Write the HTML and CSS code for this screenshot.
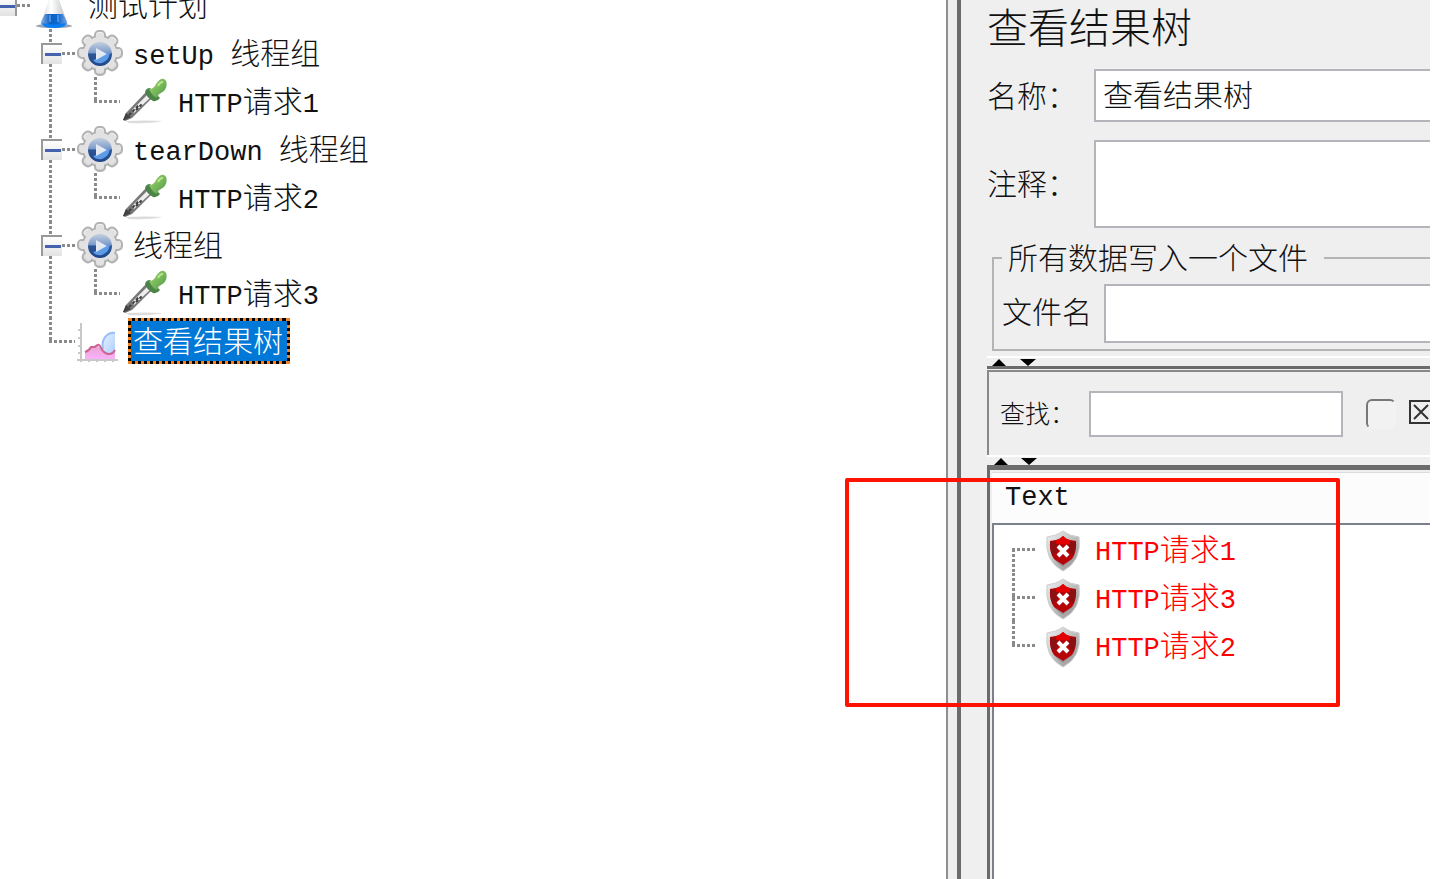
FILE: index.html
```
<!DOCTYPE html>
<html lang="zh">
<head>
    <meta charset="UTF-8">
    <title>查看结果树</title>
    <link rel="stylesheet" href="styles.css">
</head>
<body>
<!-- 图标 -->
<svg class="icon-defs" width="0" height="0">
    <defs>
        <linearGradient id="metal" x1="0" y1="0" x2="0" y2="1">
            <stop offset="0" stop-color="#f4f4f4"/>
            <stop offset="1" stop-color="#cdcdcd"/>
        </linearGradient>
        <linearGradient id="lens" x1="0" y1="0" x2="0" y2="1">
            <stop offset="0" stop-color="#c3cfe2"/>
            <stop offset=".45" stop-color="#7d9bc9"/>
            <stop offset=".5" stop-color="#2c5596"/>
            <stop offset="1" stop-color="#1f4688"/>
        </linearGradient>
        <linearGradient id="water" x1="0" y1="0" x2="1" y2="0">
            <stop offset="0" stop-color="#8db4e6"/>
            <stop offset=".35" stop-color="#0d60c0"/>
            <stop offset=".65" stop-color="#0c68d0"/>
            <stop offset="1" stop-color="#7ba6df"/>
        </linearGradient>
        <linearGradient id="glass" x1="0" y1="0" x2="1" y2="0">
            <stop offset="0" stop-color="#d4d6d8"/>
            <stop offset=".4" stop-color="#ffffff"/>
            <stop offset="1" stop-color="#b9bdc0"/>
        </linearGradient>
        <linearGradient id="bulb" x1="0" y1="0" x2="1" y2="1">
            <stop offset="0" stop-color="#a2d873"/>
            <stop offset="1" stop-color="#4f9a42"/>
        </linearGradient>
        <linearGradient id="pink" x1="0" y1="0" x2="0" y2="1">
            <stop offset="0" stop-color="#e7a5cf"/>
            <stop offset="1" stop-color="#fbb0fa"/>
        </linearGradient>
        <linearGradient id="sky" x1="0" y1="0" x2="1" y2="1">
            <stop offset="0" stop-color="#eef6ff"/>
            <stop offset="1" stop-color="#aaccfb"/>
        </linearGradient>
        <linearGradient id="rim" x1="0" y1="0" x2="1" y2="1">
            <stop offset="0" stop-color="#f3f3f3"/>
            <stop offset="1" stop-color="#8c8c8c"/>
        </linearGradient>
    </defs>
    <symbol id="i-flask" viewBox="0 0 46 46">
        <ellipse cx="22" cy="44" rx="18" ry="2" fill="#9aa1aa"/>
        <path d="M18 3h8v12l9 25q1 4-3 4H12q-4 0-3-4l9-25z" fill="url(#glass)"/>
        <path d="M13 32h18l4 8q1 5-4 5H13q-5 0-4-5z" fill="url(#water)"/>
        <path d="M10 41q12 3 24 0-1 5-12 5t-12-5z" fill="#087cf5"/>
        <path d="M18 33v7M26 33v7" stroke="#4a90df" stroke-width="2"/>
    </symbol>
    <symbol id="i-gear" viewBox="0 0 46 46">
        <g fill="url(#metal)" stroke="#b2b2b2" stroke-width="2">
            <rect x="18" y="1" width="10" height="44" rx="4"/>
            <rect x="1" y="18" width="44" height="10" rx="4"/>
            <rect x="18" y="1" width="10" height="44" rx="4" transform="rotate(45 23 23)"/>
            <rect x="18" y="1" width="10" height="44" rx="4" transform="rotate(-45 23 23)"/>
            <circle cx="23" cy="23" r="17"/>
        </g>
        <!-- 盖住齿根处的描边 -->
        <g fill="#e2e2e2">
            <rect x="19" y="3" width="8" height="40" rx="3"/>
            <rect x="3" y="19" width="40" height="8" rx="3"/>
            <rect x="19" y="3" width="8" height="40" rx="3" transform="rotate(45 23 23)"/>
            <rect x="19" y="3" width="8" height="40" rx="3" transform="rotate(-45 23 23)"/>
            <circle cx="23" cy="23" r="16"/>
        </g>
        <circle cx="23" cy="24" r="12" fill="url(#lens)"/>
        <path d="M16 30q8-2 17-9 0 9-8 12-6 1-9-3z" fill="#5d9be8"/>
        <path d="M19 18l11 6-11 6z" fill="#e3e9f3"/>
    </symbol>
    <symbol id="i-dropper" viewBox="0 0 46 46">
        <path d="M4 43q20-1 37 0-14 3-34 2z" fill="#dcdcdc"/>
        <path d="M1 42l3-7 20-21 6 6-20 20-7 3z" fill="#777"/>
        <path d="M10 32l15-15 3 3-16 15z" fill="#ededed"/>
        <path d="M7 37l10-10M14 32l7-7" stroke="#3d3d3d" stroke-width="2" stroke-dasharray="3 2"/>
        <path d="M1 42l3-7 5 4-6 3z" fill="#444"/>
        <path d="M23 14q1-4 5-4l10 10q-3 4-7 3-6-3-8-9z" fill="#4c8447"/>
        <path d="M27 11q5 0 7-5 4-6 8-5 4 2 2 9-2 4-5 5-3 1-4 5-5-2-8-9z" fill="url(#bulb)"/>
        <path d="M36 8q2-4 5-4" stroke="#b8e48f" stroke-width="2" fill="none"/>
    </symbol>
    <symbol id="i-chart" viewBox="0 0 46 46">
        <path d="M24 38q1-17 6-22 5-3 8-2v24z" fill="url(#sky)"/>
        <path d="M26 31q-2-9 4-14 4-3 8-2" fill="none" stroke="#97befa" stroke-width="2"/>
        <path d="M8 41v-7q6-6 12-7 4 4 7 8 7 4 11-1v7z" fill="url(#pink)"/>
        <path d="M8 34q4-1 6-5h4q4-5 6 1 3 6 8 6 4 0 6-4" fill="none" stroke="#cc638f" stroke-width="2"/>
        <path d="M4 5v39M0 42h41M1 12h4M1 20h4M1 28h4M1 35h4M12 41v3M20 41v3M28 41v3M36 41v3" fill="none" stroke="#c8c8c8" stroke-width="2"/>
    </symbol>
    <symbol id="i-shield" viewBox="0 0 36 42">
        <path d="M18 1q6 5 16 6 3 24-16 34Q-1 31 2 7q10-1 16-6z" fill="url(#rim)" stroke="#ccc" stroke-width="1"/>
        <path d="M18 6q5 5 13 5 1 18-13 26Q4 29 5 11q8 0 13-5z" fill="#9a9a9a"/>
        <path d="M18 6q3 4 7 4l6 1q1 11-4 18l-9 6-9-6q-5-7-4-18l6-1q4 0 7-4z" fill="#b50508"/>
        <path d="M5 12h7v9l-4 5q-3-7-3-14zM31 12h-7v9l4 5q3-7 3-14z" fill="#8a1012"/>
        <path d="M11 10q4-1 7-4 3 3 7 4v4H11z" fill="#e30000"/>
        <path d="M13 16l10 10M23 16l-10 10" stroke="#fff" stroke-width="4"/>
    </symbol>
</svg>

<div class="app">
    <nav class="plan">
        <ul class="tree">
            <li class="root">
                <div class="row"><button class="toggle" aria-label="折叠"></button><span class="dots"></span><svg class="icon"><use href="#i-flask"/></svg><span class="label">测试计划</span></div>
                <ul class="branch">
                    <li>
                        <div class="row"><button class="toggle" aria-label="折叠"></button><span class="dots"></span><svg class="icon"><use href="#i-gear"/></svg><span class="label"><span class="en">setUp </span>线程组</span></div>
                        <ul class="branch">
                            <li><div class="row leaf"><span class="dots"></span><svg class="icon"><use href="#i-dropper"/></svg><span class="label"><span class="en">HTTP</span>请求<span class="en">1</span></span></div></li>
                        </ul>
                    </li>
                    <li>
                        <div class="row"><button class="toggle" aria-label="折叠"></button><span class="dots"></span><svg class="icon"><use href="#i-gear"/></svg><span class="label"><span class="en">tearDown </span>线程组</span></div>
                        <ul class="branch">
                            <li><div class="row leaf"><span class="dots"></span><svg class="icon"><use href="#i-dropper"/></svg><span class="label"><span class="en">HTTP</span>请求<span class="en">2</span></span></div></li>
                        </ul>
                    </li>
                    <li>
                        <div class="row"><button class="toggle" aria-label="折叠"></button><span class="dots"></span><svg class="icon"><use href="#i-gear"/></svg><span class="label">线程组</span></div>
                        <ul class="branch">
                            <li><div class="row leaf"><span class="dots"></span><svg class="icon"><use href="#i-dropper"/></svg><span class="label"><span class="en">HTTP</span>请求<span class="en">3</span></span></div></li>
                        </ul>
                    </li>
                    <li><div class="row leaf"><span class="dots"></span><svg class="icon"><use href="#i-chart"/></svg><span class="label selected">查看结果树</span></div></li>
                </ul>
            </li>
        </ul>
    </nav>
    <div class="divider"></div>
    <main class="panel">
        <h1 class="title">查看结果树</h1>
        <div class="field"><label for="name">名称：</label><input id="name" class="box" value="查看结果树"></div>
        <div class="field"><label for="comment">注释：</label><textarea id="comment" class="box comment"></textarea></div>
        <fieldset class="group">
            <legend>所有数据写入一个文件</legend>
            <div class="file"><label for="file">文件名</label><input id="file" class="box file-box"></div>
        </fieldset>
        <div class="splitter"><svg width="50" height="8"><path d="M5 8l7-7 7 7zM33 1h16l-8 7z"/></svg></div>
        <div class="search">
            <label for="find">查找：</label>
            <input id="find" class="box find-box">
            <input type="checkbox" id="case" class="check">
            <label for="case" class="case"><svg width="24" height="24"><path d="M1 1h22v22H1z" stroke-width="2"/><path d="M5 5l14 14M19 5L5 19" stroke-width="2"/></svg></label>
        </div>
        <div class="splitter"><svg width="50" height="8"><path d="M7 8l7-7 7 7zM34 1h16l-8 7z"/></svg></div>
        <section class="results">
            <div class="results-head en">Text</div>
            <ul class="samples">
                <li><span class="dots"></span><svg class="shield"><use href="#i-shield"/></svg><span class="sample"><span class="en">HTTP</span>请求<span class="en">1</span></span></li>
                <li><span class="dots"></span><svg class="shield"><use href="#i-shield"/></svg><span class="sample"><span class="en">HTTP</span>请求<span class="en">3</span></span></li>
                <li><span class="dots"></span><svg class="shield"><use href="#i-shield"/></svg><span class="sample"><span class="en">HTTP</span>请求<span class="en">2</span></span></li>
            </ul>
        </section>
    </main>
</div>
<div class="highlight"></div>
</body>
</html>
```
FILE: styles.css
```
* {
    box-sizing: border-box;
}

body {
    margin: 0;
    background: #fff;
    color: #111;
    font-family: "Noto Sans CJK SC", sans-serif;
    font-size: 30px;
    font-weight: 300;
    overflow: hidden;
}

ul {
    list-style: none;
    margin: 0;
    padding: 0;
}

button, input, textarea {
    font: inherit;
    color: inherit;
}

.icon-defs {
    display: block;
}

.app {
    display: flex;
    height: 100vh;
    padding-right: 2px;
}

.en {
    font-family: "Liberation Mono", monospace;
    font-size: 27px;
    white-space: pre;
}

/* 左侧树 */
.plan {
    flex: 1;
    min-width: 0;
    overflow: hidden;
}

.tree {
    margin: -19px 0 0 -4px;
}

.row {
    display: flex;
    align-items: center;
    height: 48px;
}

.branch {
    padding-left: 45px;
}

/* 竖直虚线 */
.branch > li {
    background: repeating-linear-gradient(#8a8a8a 0 3px, transparent 3px 5px) 8px 0 / 3px 100% no-repeat;
}

.branch > li:last-child {
    background-size: 3px 25px;
}

.dots {
    height: 3px;
    width: 13px;
    margin-right: 2px;
    background: repeating-linear-gradient(90deg, #8a8a8a 0 3px, transparent 3px 5px);
}

.leaf .dots {
    width: 26px;
    margin-left: 8px;
}

.toggle {
    width: 21px;
    height: 21px;
    padding: 0;
    border: 0 solid #999;
    border-width: 2px 0 0 2px;
    background: linear-gradient(#4462ad, #4462ad) 2px 8px / 16px 3px no-repeat, linear-gradient(#fff, #e2e2e2);
}

.root > .row > .toggle {
    border-right-width: 2px;
}

.icon {
    width: 46px;
    height: 46px;
}

.label {
    height: 46px;
    line-height: 36px;
    padding: 0 4px 0 2px;
    margin-left: 5px;
    border: 3px solid transparent;
}

/* 选中项：黑底上的橙色虚线框 */
.selected {
    color: #fff;
    background: linear-gradient(#0078d7, #0078d7) padding-box, #000;
    border: 3px dotted #f58220;
}

.divider {
    width: 15px;
    background: #efefef;
    border-left: 2px solid #8b8f94;
    border-right: 4px solid #6b6b6b;
}

/* 右侧面板 */
.panel {
    flex: 0 0 469px;
    display: flex;
    flex-direction: column;
    min-width: 0;
    padding-left: 26px;
    background: #efefef;
    overflow: hidden;
}

.title {
    margin: 0;
    font-size: 41px;
    font-weight: 300;
    line-height: 50px;
    padding-bottom: 19px;
}

.field {
    display: flex;
    align-items: center;
    margin-bottom: 18px;
}

.field label {
    width: 107px;
    padding-bottom: 4px;
}

.box {
    flex: 1;
    min-width: 0;
    height: 53px;
    margin: 0;
    padding: 0 7px 6px;
    background: #fff;
    border: 2px solid #b4b4bb;
    border-right: 0;
    border-radius: 0;
    outline: 0;
}

.comment {
    height: 88px;
    resize: none;
}

.group {
    margin: -8px 0 0 5px;
    padding: 6px 0 6px 8px;
    border: 2px solid #b4b4b4;
    border-right: 0;
    min-width: 0;
}

.group legend {
    height: 40px;
    padding: 0 16px 0 6px;
    line-height: 36px;
}

.file {
    display: flex;
    align-items: center;
}

.file label {
    width: 102px;
    padding-bottom: 8px;
}

.file-box {
    height: 59px;
}

.splitter {
    display: flex;
    align-items: flex-end;
    height: 13px;
    border-top: 2px solid #fff;
    border-bottom: 3px solid #6b6b6b;
}

.group + .splitter {
    margin: 5px 0 1px;
}

.search {
    display: flex;
    align-items: center;
    height: 85px;
    padding-left: 11px;
    border: 0 solid #888;
    border-width: 2px 0 0 2px;
    font-size: 25px;
}

.search label {
    flex: none;
    width: 89px;
    padding-bottom: 4px;
}

.find-box {
    flex: 0 0 254px;
    height: 46px;
    border-right: 2px solid #b4b4bb;
}

.check {
    flex: none;
    appearance: none;
    width: 30px;
    height: 30px;
    margin: 0 13px 0 23px;
    border: 2px solid #777;
    border-right-color: transparent;
    border-bottom-color: transparent;
    border-radius: 6px;
    background: #f2f2f2;
}

.search .case {
    display: flex;
    width: 24px;
    stroke: #333;
    fill: none;
}

.results {
    flex: 1;
    display: flex;
    flex-direction: column;
    border-top: 2px solid #6b6b6b;
    border-left: 3px solid #6b6b6b;
    padding: 2px 0 0 2px;
}

.results-head {
    height: 51px;
    line-height: 51px;
    padding-left: 13px;
    background: #fcfcfc;
    border-top: 1px solid #ddd;
}

.samples {
    flex: 1;
    padding-left: 18px;
    background: #fff;
    border: 0 solid #7b808a;
    border-width: 2px 0 0 2px;
    color: #f00;
}

.samples li {
    display: flex;
    align-items: center;
    height: 48px;
    background: repeating-linear-gradient(#8a8a8a 0 3px, transparent 3px 5px) 0 0 / 3px 100% no-repeat;
}

.samples li:first-child {
    background-position: 0 24px;
}

.samples li:last-child {
    background-size: 3px 25px;
}

.samples .dots {
    width: 24px;
    margin-right: 9px;
}

.shield {
    width: 36px;
    height: 42px;
    margin: 4px 14px 0 0;
}

.sample {
    padding-bottom: 4px;
}

/* 红色标注框 */
.highlight {
    position: absolute;
    top: 478px;
    right: 92px;
    width: 495px;
    height: 229px;
    border: 4px solid #ff1200;
    border-radius: 2px;
    pointer-events: none;
}
```
